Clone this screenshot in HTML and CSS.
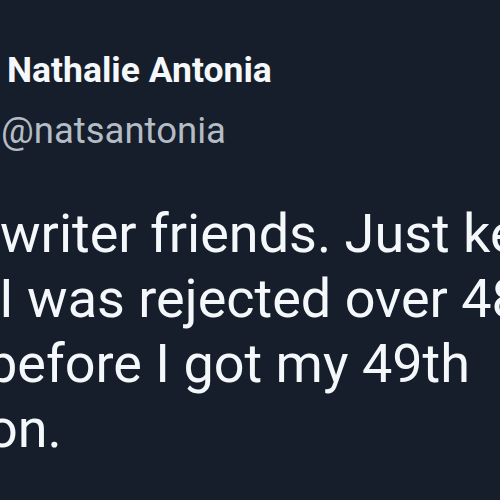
FILE: index.html
```html
<!DOCTYPE html>
<html>
<head>
<meta charset="utf-8">
<link rel="stylesheet" href="styles.css">
</head>
<body>
<div class="tweet">
  <div class="header">
    <div class="name">Nathalie Antonia</div>
    <div class="handle">@natsantonia</div>
  </div>
  <div class="text">
    <div class="line l1">writer friends. Just keep</div>
    <div class="line l2">I was rejected over 48</div>
    <div class="line l3">before I got my 49th</div>
    <div class="line l4">on.</div>
  </div>
</div>
</body>
</html>
```

FILE: styles.css
```css
html, body {
  margin: 0;
  padding: 0;
  background: #151e2a;
}
.tweet {
  width: 500px;
  height: 500px;
  overflow: hidden;
  background: #151e2a;
  font-family: Roboto, "Liberation Sans", sans-serif;
  padding-top: 50px;
  box-sizing: border-box;
}
.header {
  display: flex;
  flex-direction: column;
  gap: 21px;
}
.name {
  color: #f5f8fa;
  font-weight: 700;
  font-size: 35.5px;
  line-height: 40px;
  margin-left: 7px;
}
.handle {
  color: #b4bcc6;
  font-size: 36.5px;
  line-height: 40px;
  margin-left: 1px;
}
.text {
  margin-top: 50px;
  color: #f5f8fa;
  font-size: 54px;
  line-height: 65px;
}
.line {
  white-space: nowrap;
}
.l1 { margin-left: 0; }
.l2 { margin-left: -1px; }
.l3 { margin-left: -13px; }
.l4 { margin-left: -13px; }
```
